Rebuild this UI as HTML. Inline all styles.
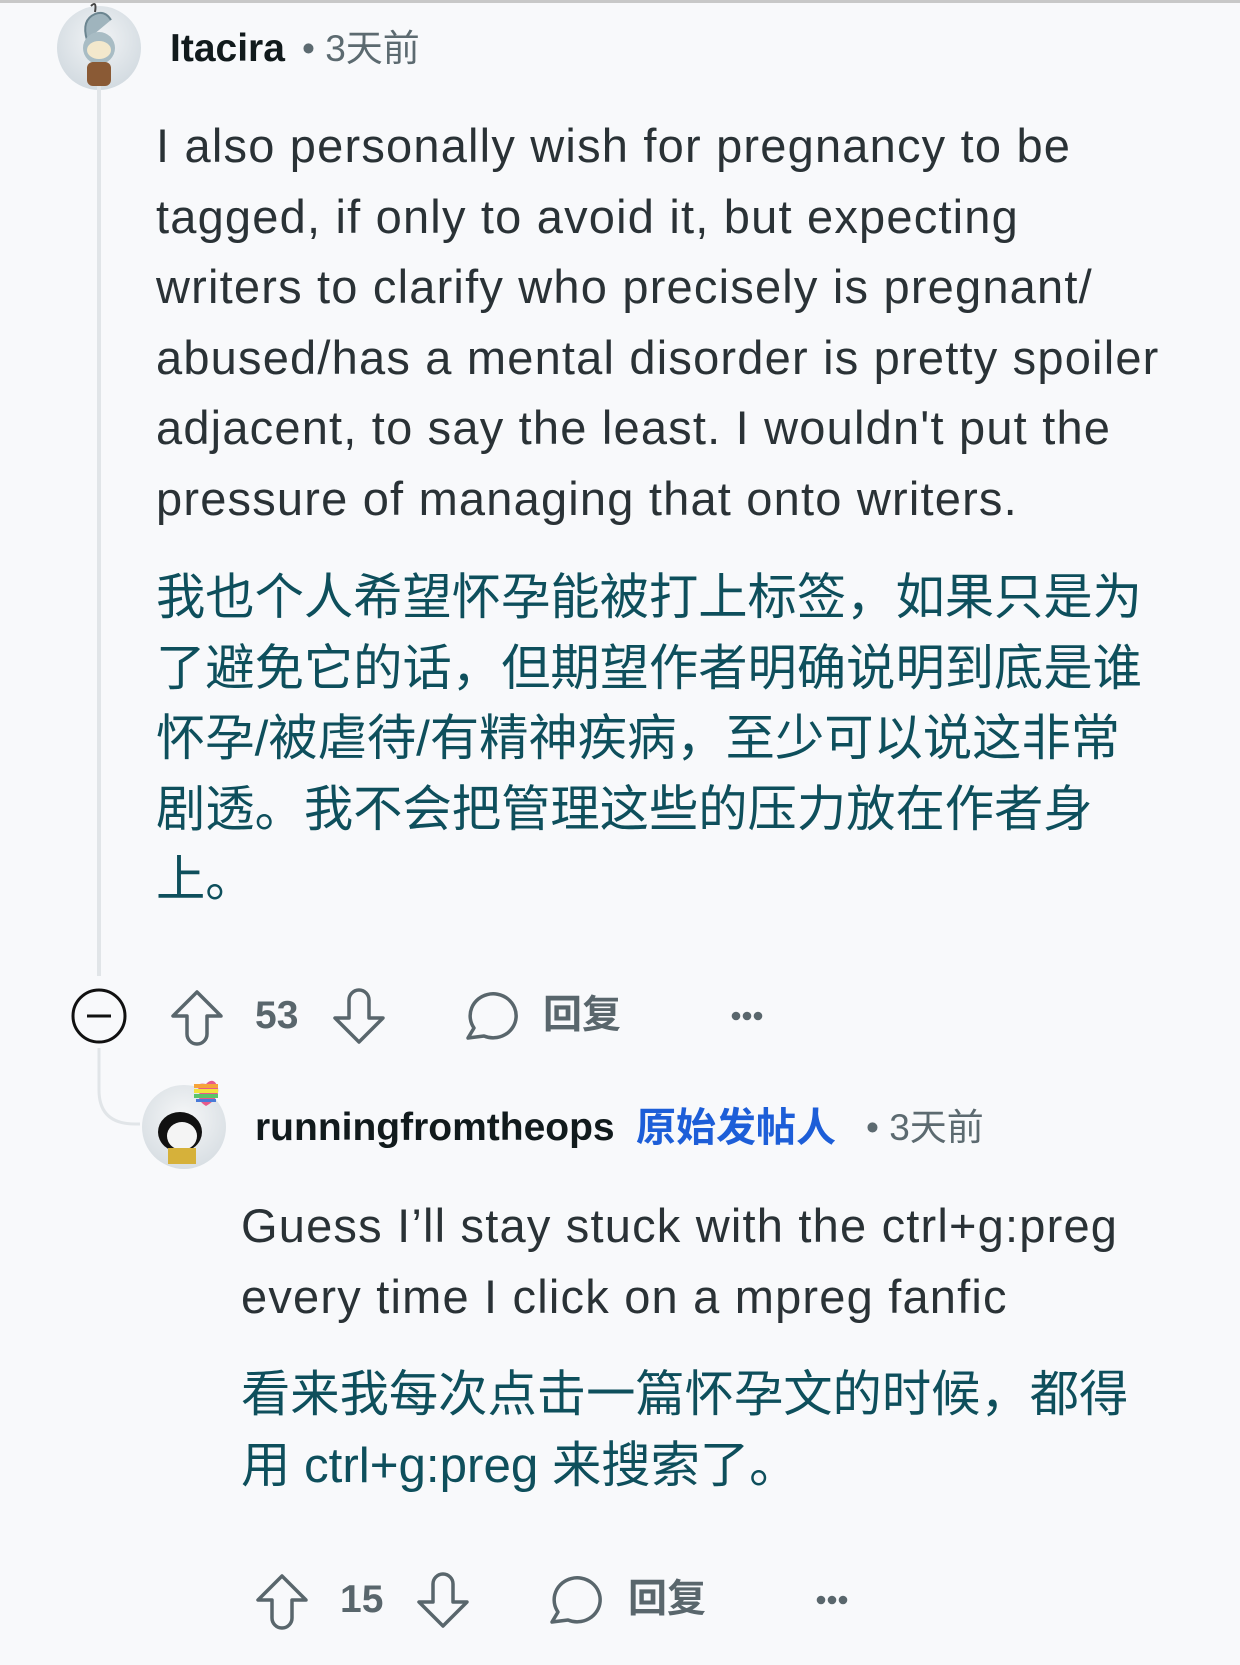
<!DOCTYPE html>
<html><head><meta charset="utf-8"><style>
html,body{margin:0;padding:0}
body{width:1240px;height:1665px;background:#f8f9fb;position:relative;overflow:hidden;font-family:"Liberation Sans","Noto Sans CJK SC",sans-serif}
.a{position:absolute;white-space:nowrap}
.en{font-size:47px;line-height:70.5px;color:#2a3236;letter-spacing:1.2px}
.zh{font-size:49.3px;line-height:70.5px;color:#0e4f5c}
.name{font-size:39px;line-height:44px;font-weight:bold;color:#111a1c;letter-spacing:0}
.meta{font-size:37px;line-height:44px;color:#5c6a70}
.act{font-size:39px;line-height:44px;font-weight:bold;color:#59666c}
svg{position:absolute;overflow:visible}
</style></head><body>
<div class="a" style="left:0;top:0;width:1240px;height:3px;background:#c8c8c8"></div>

<div class="a" style="left:57px;top:6px;width:84px;height:84px;border-radius:50%;background:radial-gradient(circle at 50% 40%,#f2f4f6,#c9d3da)"></div>
<svg style="left:57px;top:0" width="84" height="90">
<path d="M30 40 q-6 -20 8 -26 q10 -4 16 6" fill="#9fb4bd" stroke="#6b8590" stroke-width="2"/>
<circle cx="42" cy="48" r="16" fill="#a8bcc4"/>
<ellipse cx="42" cy="50" rx="12" ry="9" fill="#f3e8cc"/>
<rect x="30" y="62" width="24" height="24" rx="6" fill="#8a5a35"/>
<path d="M34 6 q6 -6 4 6" fill="none" stroke="#444" stroke-width="2"/>
</svg>
<div class="a name" style="left:170px;top:27px">Itacira</div>
<div class="a meta" style="left:302px;top:27px">• 3天前</div>

<div class="a" style="left:97px;top:86px;width:4px;height:890px;background:#e1e5e8"></div>

<div class="a en" style="left:156px;top:111px">I also personally wish for pregnancy to be<br>tagged, if only to avoid it, but expecting<br>writers to clarify who precisely is pregnant/<br>abused/has a mental disorder is pretty spoiler<br>adjacent, to say the least. I wouldn't put the<br>pressure of managing that onto writers.</div>
<div class="a zh" style="left:156px;top:563px">我也个人希望怀孕能被打上标签，如果只是为<br>了避免它的话，但期望作者明确说明到底是谁<br>怀孕/被虐待/有精神疾病，至少可以说这非常<br>剧透。我不会把管理这些的压力放在作者身<br>上。</div>

<svg style="left:0;top:0" width="1240" height="1665">
<circle cx="99" cy="1016" r="26" fill="none" stroke="#111" stroke-width="3"/>
<line x1="87" y1="1016" x2="111" y2="1016" stroke="#111" stroke-width="3"/>
<g fill="none" stroke="#59666c" stroke-width="3.5" stroke-linejoin="round">
<path d="M197 992 L173 1016 H187 V1034 a10 10 0 0 0 20 0 V1016 H221 Z"/>
<path d="M359 1042 L335 1018 H349 V1000 a10 10 0 0 1 20 0 V1018 H383 Z"/>
<path d="M468 1038 L474 1028 A23 22 0 1 1 484 1036 Z" />
</g>
<g fill="#59666c"><circle cx="736" cy="1016" r="4.3"/><circle cx="747" cy="1016" r="4.3"/><circle cx="758" cy="1016" r="4.3"/></g>
<path d="M99 1048 V1090 q0 34 36 34 H140" fill="none" stroke="#e1e5e8" stroke-width="3"/>
</svg>
<div class="a act" style="left:255px;top:994px">53</div>
<div class="a act" style="left:543px;top:994px">回复</div>

<div class="a" style="left:142px;top:1085px;width:84px;height:84px;border-radius:50%;background:radial-gradient(circle at 50% 40%,#f6f7f8,#cfd7dd)"></div>
<svg style="left:142px;top:1080px" width="90" height="90">
<path d="M58 12 q-6 -10 6 -8 q8 -8 12 4 q2 10 -12 18 q-10 -6 -6 -14 Z" fill="#e85a8a"/>
<rect x="52" y="4" width="24" height="4" fill="#f6a33a"/><rect x="52" y="9" width="24" height="4" fill="#f2e33c"/><rect x="52" y="14" width="24" height="4" fill="#5bc46a"/><rect x="54" y="19" width="20" height="3" fill="#4a7ad8"/>
<ellipse cx="38" cy="52" rx="22" ry="20" fill="#111"/>
<ellipse cx="40" cy="56" rx="15" ry="14" fill="#f4f4f4"/>
<rect x="26" y="68" width="28" height="16" fill="#d6b13a"/>
</svg>
<div class="a name" style="left:255px;top:1106px">runningfromtheops</div>
<div class="a" style="left:636px;top:1105px;font-size:40px;line-height:46px;font-weight:bold;color:#1d5ed8">原始发帖人</div>
<div class="a meta" style="left:866px;top:1106px">• 3天前</div>

<div class="a en" style="left:241px;top:1191px">Guess I’ll stay stuck with the ctrl+g:preg<br>every time I click on a mpreg fanfic</div>
<div class="a zh" style="left:241px;top:1360px">看来我每次点击一篇怀孕文的时候，都得<br>用 ctrl+g:preg 来搜索了。</div>

<svg style="left:0;top:0" width="1240" height="1665">
<g fill="none" stroke="#59666c" stroke-width="3.5" stroke-linejoin="round">
<path d="M282 1576 L258 1600 H272 V1618 a10 10 0 0 0 20 0 V1600 H306 Z"/>
<path d="M443 1626 L419 1602 H433 V1584 a10 10 0 0 1 20 0 V1602 H467 Z"/>
<path d="M552 1622 L558 1612 A23 22 0 1 1 568 1620 Z"/>
</g>
<g fill="#59666c"><circle cx="821" cy="1600" r="4.3"/><circle cx="832" cy="1600" r="4.3"/><circle cx="843" cy="1600" r="4.3"/></g>
</svg>
<div class="a act" style="left:340px;top:1578px">15</div>
<div class="a act" style="left:628px;top:1578px">回复</div>
</body></html>
